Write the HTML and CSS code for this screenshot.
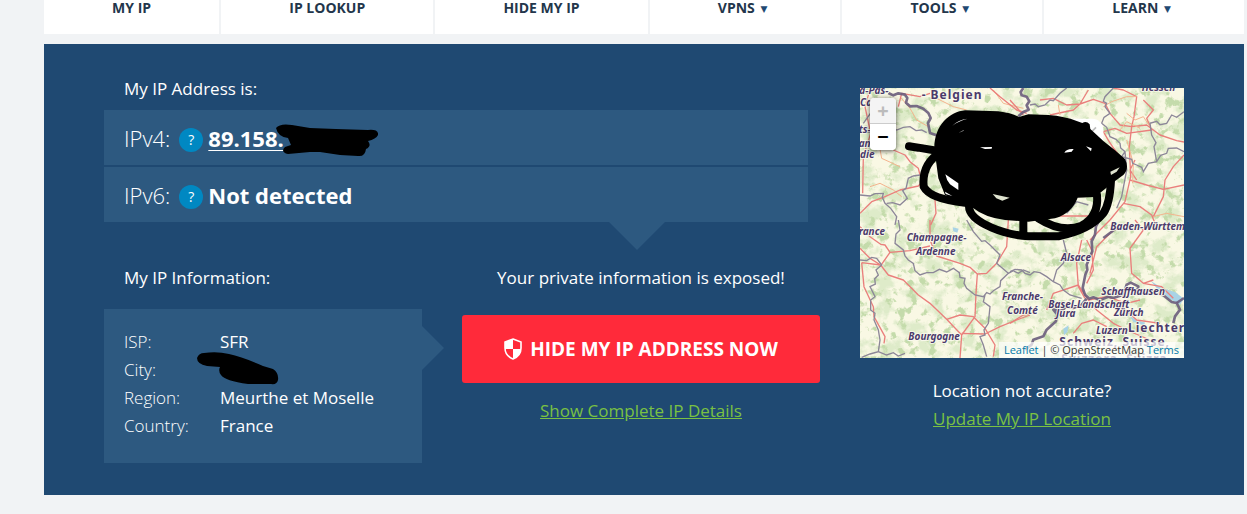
FILE: index.html
```html
<!DOCTYPE html>
<html lang="en">
<head>
    <meta charset="UTF-8">
    <meta name="viewport" content="width=device-width, initial-scale=1.0">
    <title>What Is My IP Address</title>
    <link rel="stylesheet" href="styles.css">
</head>
<body>

    <div class="page">

        <!-- Main navigation -->
        <nav class="nav">
            <a href="#">MY IP</a>
            <a href="#">IP LOOKUP</a>
            <a href="#">HIDE MY IP</a>
            <a href="#">VPNS <span class="caret">▼</span></a>
            <a href="#">TOOLS <span class="caret">▼</span></a>
            <a href="#">LEARN <span class="caret">▼</span></a>
        </nav>

        <main class="panel">

            <!-- IP details -->
            <div class="details">
                <p class="label">My IP Address is:</p>
                <div class="addresses">
                    <div class="address">
                        <span class="version">IPv4:</span>
                        <button type="button" class="help">?</button>
                        <a href="#" class="ip">89.158.</a>
                        <svg class="ip-mark" viewBox="0 0 104 34" aria-hidden="true">
                            <path d="M2 4 Q6 -1 18 1 L36 4 L62 5 L94 6 Q105 5 104 11 Q102 15 94 17 Q98 22 92 25 Q91 33 84 32 L66 31 L46 28 L36 28 L14 30 Q6 28 11 23 L17 21 L14 14 Q4 13 2 4Z"/>
                        </svg>
                    </div>
                    <div class="address">
                        <span class="version">IPv6:</span>
                        <button type="button" class="help">?</button>
                        <strong>Not detected</strong>
                    </div>
                </div>

                <div class="columns">
                    <section class="info">
                        <p class="label">My IP Information:</p>
                        <dl class="info-box">
                            <dt>ISP:</dt><dd>SFR</dd>
                            <dt>City:</dt>
                            <dd class="city">
                                <svg class="city-mark" viewBox="0 0 82 33" aria-hidden="true">
                                    <path d="M7 1 Q20 -1 32 2 Q46 5 66 14 L76 17 Q82 21 81 28 Q80 33 74 32 H51 Q28 29 24 23 Q21 19 23 15 L10 14 Q0 12 0 6 Q2 1 7 1Z"/>
                                </svg>
                            </dd>
                            <dt>Region:</dt><dd>Meurthe et Moselle</dd>
                            <dt>Country:</dt><dd>France</dd>
                        </dl>
                    </section>

                    <section class="action">
                        <p>Your private information is exposed!</p>
                        <button type="button" class="hide-button">
                            <svg class="shield" viewBox="0 0 18 22" aria-hidden="true">
                                <path d="M9 1 L17 4 V10 C17 15 14 19 9 21 C4 19 1 15 1 10 V4Z" fill="none" stroke="#fff" stroke-width="1.6"/>
                                <path d="M9 1 V11 H1 V4Z M9 11 H17 C17 15 14 19 9 21Z" fill="#fff"/>
                            </svg>
                            HIDE MY IP ADDRESS NOW
                        </button>
                        <a href="#" class="green-link">Show Complete IP Details</a>
                    </section>
                </div>
            </div>

            <!-- Location map -->
            <aside class="location">
                <div class="map">
                    <svg class="map-canvas" viewBox="0 0 972 810" preserveAspectRatio="xMidYMid slice" role="img" aria-label="Map of north-east France">
                        <filter id="woods" x="0" y="0" width="100%" height="100%" color-interpolation-filters="sRGB">
                            <feTurbulence type="fractalNoise" baseFrequency="0.035" numOctaves="5" seed="8"/>
                            <feColorMatrix values="0 0 0 0 .77  0 0 0 0 .86  0 0 0 0 .67  7 0 0 0 -3.9"/>
                        </filter>
                        <filter id="meadows" x="0" y="0" width="100%" height="100%" color-interpolation-filters="sRGB">
                            <feTurbulence type="fractalNoise" baseFrequency="0.02" numOctaves="5" seed="3"/>
                            <feColorMatrix values="0 0 0 0 .87  0 0 0 0 .92  0 0 0 0 .79  0 5 0 0 -2.4"/>
                        </filter>
                        <rect width="972" height="810" fill="#f9f8e4"/>
                        <rect width="972" height="810" filter="url(#meadows)"/>
                        <rect width="972" height="810" filter="url(#woods)"/>

                        <!-- lakes -->
                        <g class="water">
                            <path d="M872 578 L905 600 L945 612 L972 632 L960 650 L925 630 L900 612Z"/>
                            <path d="M278 418 l18 4 -4 12 -12 -4Z M808 682 l20 14 28 8 -6 8 -30 -10Z M610 722 l16 -10 -4 20 -10 10Z"/>
                        </g>

                        <!-- roads -->
                        <g class="road small" transform="translate(-30 -24)">
                            <path d="M150 50 L180 85 L200 120 L235 140 M60 320 L90 310 L130 330 L155 350 M85 180 L95 235 L150 260 M260 55 L310 80 L350 90 M430 30 L460 70 L520 85"/>
                        </g>
                        <g class="road" transform="translate(-30 -24)">
                            <path d="M60 28 L45 80 L62 160 L40 230 L38 340 M130 210 L165 225 L180 245 L205 265 L210 285 M30 400 L65 365 L100 352 L150 330 L205 318 L230 290 M255 360 L258 400 L242 435 M145 80 L155 40 L210 50 L240 40 M420 24 L450 50 L500 90 L530 100"/>
                        </g>
                        <g class="road" transform="translate(450 -24)">
                            <path d="M0 60 L40 105 M90 60 L130 55 L170 75 L210 72 L250 58 L285 70 L300 100 L330 135 L365 140 L410 135 L450 165 L500 182 L522 186 M120 105 L190 90 L210 72 L235 30 M310 24 L340 30 L380 50 L372 110 L365 140 L358 200 L362 290 L345 365 L300 420 M280 155 L315 145 L350 160 L425 150 L410 115 L430 90 L400 60 M360 300 L410 315 L460 328 L522 315 M522 225 L490 260 L465 300 L460 350 L430 410 M340 370 L390 380 L425 405 L435 430 M375 240 L360 270 L380 300 M130 408 L235 408 M280 155 Q310 210 340 240"/>
                        </g>
                        <g class="road small" transform="translate(450 -24)">
                            <path d="M380 50 L350 50 L305 65 L280 80 M350 100 L375 120 L400 110 L420 140 M330 150 L350 125 L390 145 M350 180 L370 250 L368 310 M430 410 L470 400 L522 410 M150 105 L145 75"/>
                        </g>
                        <g class="road" transform="translate(-30 396)">
                            <path d="M30 20 L60 50 L92 73 L105 75 L120 97 L90 140 M120 97 L180 92 L240 78 M240 0 L240 60 L260 108 L330 130 L360 142 L382 162 L410 160 L440 130 L455 105 L470 80 L475 0 M382 162 L378 220 L375 290 L335 345 L330 414 M30 85 L60 115 L92 135 L35 128 M35 128 L42 200 L70 260 L72 290 L105 350 L102 370 M92 135 L115 165 L160 180 L205 225 L240 250 L290 298 L335 345 M290 298 L330 285 L370 290 L405 325 L435 375 L430 410 M335 340 L405 342 L450 320 L500 300 L540 285"/>
                        </g>
                        <g class="road" transform="translate(450 396)">
                            <path d="M215 60 L200 130 L205 200 L225 235 M230 60 L245 90 L250 150 L230 190 M110 270 L130 220 L205 195 L235 240 L260 270 L310 310 L350 330 L420 360 M375 0 L400 30 L360 85 L365 160 L400 190 L430 180 M0 310 L40 285 L80 275 M235 240 L290 230 L350 250 L390 240 M190 340 L215 310 L250 300 L290 320 M330 255 L380 300 L450 310 M320 20 L260 80 L240 160 M240 60 L300 0 M400 190 L455 200 L490 235"/>
                        </g>

                        <!-- region borders -->
                        <g class="region" transform="translate(-30 -24)">
                            <path d="M30 345 L60 348 L75 341 L100 340 L97 352 L105 370 L122 385 L140 410 L135 435 M210 285 L190 288 L175 295 L168 325 L158 332 L172 355 L150 375 L128 368 L110 370 M30 150 L42 158 L70 155 L85 148 L100 152 L115 143 L140 150 L160 142 L180 140 L198 152 L215 150 L230 158 M40 130 L65 95"/>
                        </g>
                        <g class="region" transform="translate(450 -24)">
                            <path d="M60 75 L75 72 L85 80 L105 75 L120 60 L130 62 L150 40 L170 24 M310 24 L285 50 L280 64 L290 70 L285 80 L300 100 L282 112 L275 130 L290 142 L300 170 L318 178 L330 190 L332 204 L345 215 L335 230 L365 238 L368 250 L380 255 L395 262 L400 275 L415 250 L440 245 L432 200 L438 188 L425 165 L420 130 L440 124 L450 134 L470 130 L485 105 L500 112 L522 95 M440 245 L452 226 L470 220 L475 205 L500 204 L522 215 M345 215 L350 270 L335 350 L320 385 M170 400 L200 365 L235 375"/>
                        </g>
                        <g class="region" transform="translate(-30 396)">
                            <path d="M145 0 L150 30 L138 42 L135 70 L160 90 L165 108 L175 120 L190 130 L195 152 L210 165 L230 158 L250 158 L268 148 L290 156 L310 145 L328 158 L330 172 L345 175 L342 190 L350 205 L375 225 L400 230 L410 218 L420 222 L430 212 L450 200 L452 182 L475 160 L440 130 L450 105 L420 75 L405 62 L395 64 L370 35 L350 0 M30 120 L50 122 L65 112 L80 115 L95 135 L78 150 L85 165 L74 176 L76 192 L60 200 L75 230 L62 240 L62 270 L75 280 L72 300 L85 330 L90 360 L85 395 L60 402 L35 412 M85 395 L110 405 L130 398 L145 408 L165 400 M405 225 L400 245 L420 260 L415 310 L402 330 L405 345 L390 350 L400 375 L410 410 M475 160 L490 152 L505 160 L520 150 L540 158"/>
                        </g>
                        <g class="region" transform="translate(450 396)">
                            <path d="M0 155 L15 148 L35 150 L45 160 L60 165 L72 155 L90 158 L110 170 L130 185 L150 195 L160 210 L180 225 L215 235 M130 185 L140 150 L160 130 L170 100 L160 60"/>
                        </g>

                        <!-- national borders -->
                        <g class="country">
                            <path d="M85 15 L100 22 L115 16 L135 20 L142 30 L138 44 L150 55 L170 54 L190 62 L205 75 L212 90 L204 105 L210 135 L230 142"/>
                            <path d="M490 0 L482 12 L485 22 L500 26 L508 40 L500 52 L506 65 L490 72 L475 85"/>
                            <path d="M722 390 L708 415 L705 440 L695 460 L697 490 L680 530 L682 545 L676 560 L668 600 L675 620 L688 632 L700 628 L720 636 L745 626 L760 630 L790 620 L800 590 L812 584 L835 595 L830 612 L850 615 L880 612 L910 622 L935 642 L950 645 L960 665 L945 685 L940 705"/>
                            <path d="M680 632 L665 650 L640 660 L620 655 L605 668 L580 665 L592 680 L588 700 L560 725 L550 745 L520 755 L515 770 L495 785"/>
                            <path d="M950 645 L972 630 M770 420 L730 450"/>
                        </g>

                        <!-- place names -->
                        <g class="place">
                            <text x="-2" y="17">a-Pas-</text>
                            <text x="0" y="55">Ca</text>
                            <text x="-4" y="136">ts-</text>
                            <text x="-4" y="176">and</text>
                            <text x="0" y="211">die</text>
                            <text x="-4" y="440">rance</text>
                            <text x="140" y="458">Champagne-</text>
                            <text x="168" y="500">Ardenne</text>
                            <text x="145" y="755">Bourgogne</text>
                            <text x="426" y="637">Franche-</text>
                            <text x="441" y="679">Comté</text>
                            <text x="602" y="518">Alsace</text>
                            <text x="751" y="427">Baden-Württem</text>
                            <text x="724" y="620">Schaffhausen</text>
                            <text x="565" y="659">Basel-Landschaft</text>
                            <text x="588" y="688">Jura</text>
                            <text x="762" y="684">Zürich</text>
                            <text x="708" y="738">Luzern</text>
                            <text x="845" y="9">Hessen</text>
                        </g>
                        <g class="nation">
                            <text x="185" y="34">- Belgien</text>
                            <text x="804" y="733">Liechter</text>
                            <text x="598" y="773">Schweiz, Suisse,</text>
                            <text x="604" y="824">Svizzera, Svizra</text>
                        </g>

                        <!-- popup -->
                        <rect class="popup" x="540" y="92" width="190" height="140" rx="34"/>
                        <path d="M696 130 l12 -12" stroke="#bbb" stroke-width="5"/>

                        <!-- marker pen -->
                        <g class="marker" transform="translate(105 -9)">
                            <path class="blot" d="M118 190 C118 120 165 80 210 76 L310 79 Q350 84 372 96 L400 88 L460 90 Q510 94 545 108 L562 114 Q574 106 584 118 L586 132 L625 168 L660 196 L690 222 Q704 250 685 270 L655 292 L600 336 L548 338 Q530 385 480 400 L400 410 L330 405 Q270 398 230 366 L150 330 L130 280Z"/>
                            <path d="M42 184 L70 188 L130 198"/>
                            <path d="M125 210 Q80 245 86 305 Q105 342 210 353"/>
                            <path d="M222 362 Q220 398 290 428 Q340 450 400 454 L490 454 Q585 435 625 385 Q645 355 648 285"/>
                            <path d="M606 330 Q612 395 560 422 Q500 445 430 400 M385 400 V450"/>
                            <path class="glint" d="M172 122 Q190 104 218 101 Q190 108 172 122Z M190 144 L208 134 L204 138Z M255 187 L291 186 L290 191 L270 192Z M508 203 Q515 190 536 192 L530 200Z M573 184 L590 190 L588 199Z M151 268 L190 295 V315 L165 298 Q154 285 151 268Z M150 320 L172 333 L152 327Z"/>
                            <path class="gap" d="M293 327 L344 338 L322 347 L304 340Z M646 260 L674 247 L665 260 L648 270Z"/>
                        </g>
                    </svg>
                    <div class="zoom">
                        <button type="button" aria-label="Zoom in" disabled>+</button>
                        <button type="button" aria-label="Zoom out">−</button>
                    </div>
                    <div class="credits"><a href="#">Leaflet</a> | © OpenStreetMap <a href="#">Terms</a></div>
                </div>
                <p>Location not accurate?</p>
                <a href="#" class="green-link">Update My IP Location</a>
            </aside>

        </main>
    </div>

</body>
</html>
```
FILE: styles.css
```css
/* General styling */
* {
    margin: 0;
    padding: 0;
    box-sizing: border-box;
}

body {
    background-color: #f1f3f5;
    color: #fff;
    font-family: "Open Sans", "Noto Sans", sans-serif;
    font-size: 17px;
    line-height: 28px;
}

button {
    font-family: inherit;
    border: none;
    cursor: pointer;
}

.page {
    margin: 0 3px 0 44px;
}

/* Navigation */
.nav {
    display: flex;
    gap: 2px;
    margin-bottom: 10px;
}

.nav a {
    flex: 1 1 auto;
    padding-bottom: 18px;
    background-color: #fff;
    color: #23364b;
    font-size: 14px;
    font-weight: 700;
    line-height: 16px;
    text-align: center;
    text-decoration: none;
}

.caret {
    margin: 0 5px 0 2px;
    color: #1f4972;
    font-family: "DejaVu Sans", sans-serif;
    font-size: 9px;
    line-height: 9px;
    vertical-align: 1px;
}

/* Blue panel */
.panel {
    display: flex;
    gap: 40px;
    padding: 31px 60px 32px;
    background-color: #1f4972;
}

.details {
    flex: 1;
}

.label {
    padding-left: 20px;
}

/* IPv4 and IPv6 rows */
.addresses {
    position: relative;
    display: grid;
    gap: 2px;
    margin: 7px 12px 42px 0;
}

.addresses::after {
    content: '';
    position: absolute;
    top: 100%;
    right: 143px;
    border: 28px solid transparent;
    border-top-color: #2d5980;
    border-bottom: none;
}

.address {
    position: relative;
    display: flex;
    align-items: center;
    height: 55px;
    padding: 0 20px;
    background-color: #2d5980;
    font-size: 22px;
}

.version {
    font-weight: 300;
}

.help {
    width: 24px;
    height: 24px;
    margin: 4px 5px 0 9px;
    border-radius: 50%;
    background-color: #0088c2;
    color: #fff;
    font-size: 14px;
}

.ip {
    color: #fff;
    font-weight: 700;
    text-underline-offset: 3px;
    text-decoration-thickness: 1px;
}

.ip-mark {
    position: absolute;
    left: 170px;
    top: 14px;
    width: 104px;
    height: 34px;
}

/* Lower columns */
.columns {
    display: grid;
    grid-template-columns: 318fr 358fr;
    gap: 40px;
}

.info-box {
    position: relative;
    display: grid;
    grid-template-columns: 96px 1fr;
    margin-top: 17px;
    padding: 19px 20px 23px;
    background-color: #2d5980;
}

.info-box::after {
    content: '';
    position: absolute;
    top: 17px;
    left: 100%;
    border: 22px solid transparent;
    border-left-color: #2d5980;
    border-right: none;
}

.info-box dt {
    font-weight: 300;
}

.city {
    position: relative;
}

.city-mark {
    position: absolute;
    left: -23px;
    top: -4px;
    width: 82px;
    height: 33px;
}

.action,
.location {
    text-align: center;
}

.hide-button {
    display: flex;
    align-items: center;
    justify-content: center;
    gap: 8px;
    width: 100%;
    height: 68px;
    margin: 23px 0 14px;
    border-radius: 3px;
    background-color: #ff2a3a;
    color: #fff;
    font-size: 19px;
    font-weight: 700;
}

.shield {
    width: 18px;
    height: 22px;
}

.green-link {
    color: #7ac143;
}

/* Map */
.location {
    width: 324px;
    padding-top: 13px;
}

.map {
    position: relative;
    height: 270px;
    margin-bottom: 19px;
    overflow: hidden;
}

.map-canvas {
    display: block;
    width: 100%;
    height: 100%;
}

.water {
    fill: #a9d3e6;
}

.road {
    fill: none;
    stroke: #ea7f7c;
    stroke-width: 4;
    stroke-linejoin: round;
}

.small {
    stroke: #f4b48e;
    stroke-width: 3;
}

.region {
    fill: none;
    stroke: #8c8698;
    stroke-width: 4;
}

.country {
    fill: none;
    stroke: #6a5d7c;
    stroke-width: 8;
    stroke-linejoin: round;
    stroke-opacity: 0.9;
}

.place,
.nation {
    fill: #4b3a6b;
    stroke: #fbfaee;
    stroke-width: 5;
    paint-order: stroke;
    font-family: "Noto Sans", sans-serif;
    font-weight: 700;
}

.place {
    font-size: 30px;
    font-style: italic;
}

.nation {
    font-size: 36px;
    letter-spacing: 3px;
}

.popup {
    fill: #fff;
}

.marker {
    fill: none;
    stroke: #000;
    stroke-width: 24;
    stroke-linecap: round;
}

.blot {
    fill: #000;
    stroke: none;
}

.glint {
    fill: #fff;
    stroke: none;
}

.gap {
    fill: #dfe3cf;
    stroke: none;
}

.zoom {
    position: absolute;
    left: 10px;
    top: 10px;
    width: 26px;
    border-radius: 4px;
    box-shadow: 0 1px 5px rgba(0, 0, 0, 0.65);
    overflow: hidden;
}

.zoom button {
    display: block;
    width: 26px;
    height: 26px;
    background-color: #fff;
    color: #000;
    font-size: 20px;
    font-weight: 700;
    line-height: 26px;
}

.zoom button:disabled {
    border-bottom: 1px solid #ccc;
    background-color: #f4f4f4;
    color: #bbb;
}

.credits {
    position: absolute;
    right: 0;
    bottom: 0;
    padding: 0 5px;
    background-color: rgba(255, 255, 255, 0.7);
    color: #333;
    font-size: 11px;
    line-height: 16px;
}

.credits a {
    color: #0078a8;
    text-decoration: none;
}
```
